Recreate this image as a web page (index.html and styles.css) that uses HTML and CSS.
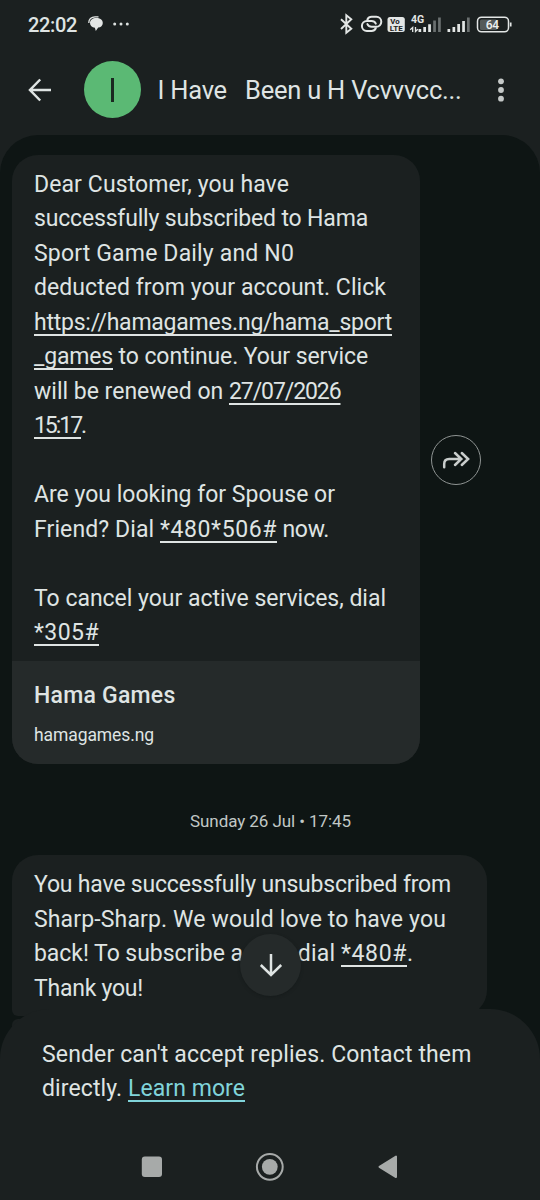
FILE: index.html
```html
<!DOCTYPE html>
<html lang="en">
<head>
<meta charset="utf-8">
<title>Messages</title>
<link rel="stylesheet" href="styles.css">
</head>
<body>
<div class="screen">
  <div class="status">
    <span class="clock" data-w="49">22:02</span>
    <svg class="chat" width="16" height="16" viewBox="0 0 16 16"><path d="M.9 7C.4 3.500 3.500.8 7 .8h3.500" fill="none" stroke="#e3e6e5" stroke-width="1.300"/><path d="M8.300 2c3.800 0 6.500 1.900 6.500 4.900 0 2.600-2 4.300-4.600 4.700L7.800 15l-.9-3.300C4 11.300 2 9.500 2 7c0-3 2.600-5 6.300-5z" fill="#e3e6e5"/></svg>
    <svg class="dots" width="16" height="4" viewBox="0 0 16 4" fill="#dde1e0"><circle cx="1.700" cy="2" r="1.500"/><circle cx="8" cy="2" r="1.500"/><circle cx="14.300" cy="2" r="1.500"/></svg>
    <svg class="tray" width="200" height="24" viewBox="330 12 200 24">
      <path d="M341 19.200l10.300 9.500-5 4V15.200l5 4.100L341 29" fill="none" stroke="#e3e6e5" stroke-width="1.900"/>
      <g fill="none" stroke="#e3e6e5" stroke-width="2" stroke-linecap="round"><path d="M375.800 28.200c-.8 1.700-2.200 2.700-4.200 2.700h-4.700a5 5 0 0 1 0-10h4.700c2 0 3.400 1 4.200 2.700"/><path d="M367.400 19.500c.8-1.700 2.200-2.700 4.200-2.700h4.700a5 5 0 0 1 0 10h-4.700c-2 0-3.400-1-4.200-2.700"/></g>
      <rect x="387.500" y="17" width="17.300" height="15" rx="2.500" fill="#e3e6e5"/>
      <g font-family="Roboto,sans-serif" font-weight="700" fill="#1b2020" font-size="7.800"><text x="390.300" y="24.200">Vo</text><text x="389.700" y="30.900" textLength="13" lengthAdjust="spacingAndGlyphs">LTE</text></g>
      <text x="411" y="23.400" font-family="Roboto,sans-serif" font-weight="700" font-size="10.500" fill="#e3e6e5" textLength="13.200" lengthAdjust="spacingAndGlyphs">4G</text>
      <path d="M412.700 32v-4.500l-2.500 2.300M415.500 27v4.500l2.300-2.300" fill="none" stroke="#e3e6e5" stroke-width="1.300"/>
      <path d="M418.500 29h2.700v3h-2.700zM423.300 27h2.700v5h-2.700zM428.200 24.300h2.700v7.700h-2.700zM447.500 29h2.700v3h-2.700zM452.500 27h2.700v5h-2.700zM457.300 24h2.700v8h-2.700zM462.200 21h2.700v11h-2.700z" fill="#e3e6e5"/>
      <path d="M433.200 20.500h2.700V32h-2.700zM438.100 17.500h2.700V32h-2.700zM467 17.500h2.700V32H467z" fill="#6b7070"/>
      <rect x="480" y="19.500" width="17" height="10.500" rx="1.500" fill="#555a5a"/>
      <rect x="477.500" y="17.200" width="31" height="14.600" rx="4" fill="none" stroke="#e3e6e5" stroke-width="1.500"/>
      <path d="M510.700 22.500v4" stroke="#e3e6e5" stroke-width="1.700"/>
      <text x="485.700" y="28.900" font-family="Roboto,sans-serif" font-weight="500" font-size="12" fill="#eef1f0" textLength="13.500">64</text>
    </svg>
  </div>

  <div class="appbar">
    <svg class="back" width="24" height="24" viewBox="0 0 24 24"><path d="M12.200 1.500L2 12l10.200 10.500M2 12h21" fill="none" stroke="#dfe4e3" stroke-width="2.500"/></svg>
    <div class="avatar"><i></i></div>
    <span class="title" data-w="304">I Have&nbsp;&nbsp; Been u H Vcvvvcc...</span>
    <svg class="more" width="6" height="24" viewBox="0 0 6 24" fill="#c5c9c8"><circle cx="3" cy="3.300" r="2.900"/><circle cx="3" cy="12" r="2.900"/><circle cx="3" cy="20.700" r="2.900"/></svg>
  </div>

  <main class="thread">
    <div class="row">
      <article class="bubble first">
        <div class="text">
          <p><span data-w="255">Dear Customer, you have</span></p>
          <p><span data-w="334">successfully subscribed to Hama</span></p>
          <p><span data-w="260">Sport Game Daily and N0</span></p>
          <p><span data-w="352">deducted from your account. Click</span></p>
          <p><a data-w="358">https://hamagames.ng/hama_sport</a></p>
          <p><a data-w="79">_games</a><span data-w="255"> to continue. Your service</span></p>
          <p><span data-w="195">will be renewed on </span><a data-w="111.500">27/07/2026</a></p>
          <p><a data-w="47">15:17</a><span>.</span></p>
          <p>&nbsp;</p>
          <p><span data-w="301">Are you looking for Spouse or</span></p>
          <p><span data-w="126">Friend? Dial </span><a data-w="117">*480*506#</a><span data-w="52"> now.</span></p>
          <p>&nbsp;</p>
          <p><span data-w="352">To cancel your active services, dial</span></p>
          <p><a data-w="65">*305#</a></p>
        </div>
        <div class="preview">
          <div class="site"><span data-w="141.500">Hama Games</span></div>
          <div class="host"><span data-w="120">hamagames.ng</span></div>
        </div>
      </article>
      <div class="forward"><svg width="28" height="20" viewBox="442 450 28 20"><path d="M444.200 467.300V464c0-3.300 1.800-5 5-5h12M455 453l6.300 6-6.300 6M461.800 453l6.300 6-6.300 6" fill="none" stroke="#c9cdcc" stroke-width="2.500" stroke-linecap="round"/></svg></div>
    </div>
    <div class="date"><span data-w="161">Sunday 26 Jul • 17:45</span></div>
    <article class="bubble second">
      <div class="text">
        <p><span data-w="417">You have successfully unsubscribed from</span></p>
        <p><span data-w="412">Sharp-Sharp. We would love to have you</span></p>
        <p><span data-w="209">back! To subscribe a</span><span data-w="98">gain, dial </span><a data-w="66">*480#</a><span>.</span></p>
        <p><span data-w="109">Thank you!</span></p>
      </div>
    </article>
    <article class="bubble third"></article>
    <div class="jump"><svg width="24" height="24" viewBox="0 0 24 24"><path d="M12 1v21M1.800 12L12 22l10.200-10" fill="none" stroke="#dfe4e3" stroke-width="2.500"/></svg></div>
  </main>

  <footer class="notice">
    <p><span data-w="429.500">Sender can't accept replies. Contact them</span></p>
    <p><span data-w="86">directly. </span><a class="learn" data-w="117">Learn more</a></p>
    <nav class="nav">
      <svg width="260" height="30" viewBox="140 1152 260 30" fill="#a7aaa9"><rect x="141.800" y="1156.600" width="20.200" height="20.400" rx="3"/><circle cx="269.800" cy="1166.800" r="12.900" fill="none" stroke="#a7aaa9" stroke-width="2"/><circle cx="269.800" cy="1166.800" r="7.900"/><path d="M379.500 1166.800l16.500-10.300v20.600z" stroke="#a7aaa9" stroke-width="2" stroke-linejoin="round"/></svg>
    </nav>
  </footer>
</div>
<script src="fit.js"></script>
</body>
</html>
```
FILE: styles.css
```css
* { box-sizing: border-box; }
body { margin: 0; background: #1b2020; color: #dfe4e3; font-family: Roboto, "Liberation Sans", sans-serif; }
p { margin: 0; }
.screen { width: 540px; height: 1200px; overflow: hidden; display: flex; flex-direction: column; background: #1b2020; }
[data-w] { white-space: pre; }

.status { height: 48px; display: flex; align-items: center; padding-left: 28px; flex: none; }
.clock { width: 49px; font-size: 20px; font-weight: 500; padding-top: 2px; }
.chat { margin-left: 11px; }
.dots { margin-left: 9px; }
.tray { margin-left: 201px; }

.appbar { height: 87px; display: flex; align-items: center; padding: 0 0 3px 28px; flex: none; }
.avatar { width: 57px; height: 57px; margin: -1px 0 0 32px; border-radius: 50%; background: #5bb974; display: flex; align-items: center; justify-content: center; }
.avatar i { width: 3px; height: 24px; background: #1b2821; }
.title { width: 304px; margin-left: 16.500px; font-size: 25.500px; line-height: 34px; }
.more { margin-left: 36.500px; }

.thread { height: 924px; flex: none; padding: 20px 0 0 12px; background: #0e1514; border-radius: 38px 38px 0 0; overflow: hidden; position: relative; }
.row { display: flex; align-items: center; gap: 11px; }
.bubble { background: #1b2020; overflow: hidden; font-size: 23px; line-height: 34.500px; }
.first { width: 408px; height: 609px; border-radius: 26px; }
.first .text { height: 505.500px; padding: 12.500px 0 0 22px; }
.text p { height: 34.500px; white-space: pre; }
a { text-decoration: underline; text-decoration-thickness: 2px; text-underline-offset: 4px; text-decoration-skip-ink: none; }
.preview { height: 104px; padding: 18px 0 0 22px; background: #252a2a; }
.site { font-size: 23px; font-weight: 500; line-height: 34px; }
.host { font-size: 17.500px; line-height: 24px; margin-top: 10px; }
.forward { width: 50px; height: 50px; border: 1.500px solid #8f9493; border-radius: 50%; display: flex; align-items: center; justify-content: center; }
.date { height: 91px; padding: 45px 0 0 178px; font-size: 17px; line-height: 24px; color: #c1c8c6; }
.second { width: 475px; height: 161px; padding: 13px 0 0 22px; border-radius: 26px 26px 26px 6px; }
.third { width: 475px; height: 60px; margin-top: 3px; border-radius: 6px 26px 0 0; }
.jump { position: absolute; left: 240px; top: 799px; width: 61px; height: 62px; border-radius: 50%; background: #252a2a; box-shadow: 0 1px 3px #161b1b; display: flex; align-items: center; justify-content: center; }

.notice { position: relative; height: 191px; flex: none; margin-top: -50px; padding: 29px 0 0 42px; border-radius: 50px 50px 0 0; background: #1b2020; font-size: 23px; line-height: 34.500px; }
.notice p { height: 34px; white-space: pre; }
.learn { color: #80d4da; }
.nav { padding: 46px 0 0 98px; line-height: 0; }
```
FILE: fit.js
```js
document.fonts.ready.then(() => {
  document.querySelectorAll("[data-w]").forEach((el) => {
    const range = document.createRange();
    range.selectNodeContents(el);
    const natural = range.getBoundingClientRect().width;
    const spacing = (Number(el.dataset.w) - natural) / el.textContent.length;
    el.style.letterSpacing = spacing.toFixed(3) + "px";
  });
});
```
